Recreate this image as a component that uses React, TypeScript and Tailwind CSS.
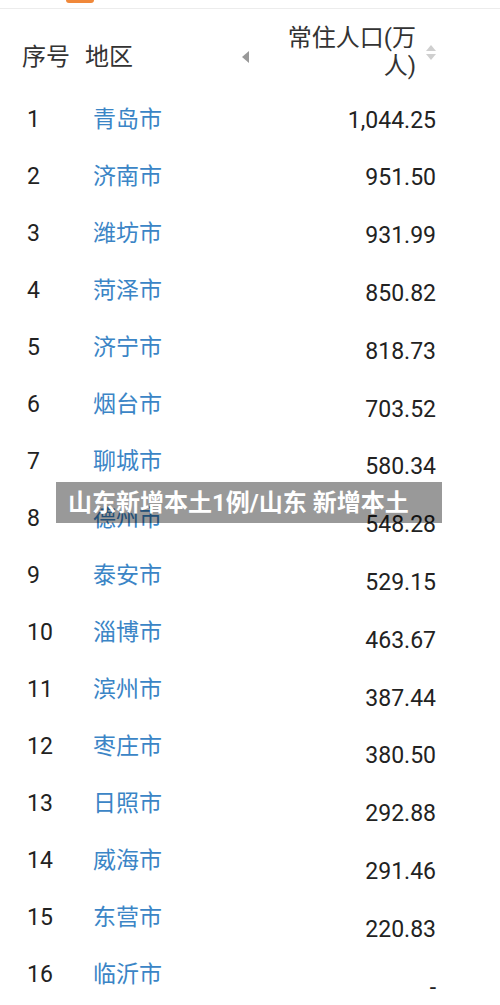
const rows: [string, string][] = [
  ['青岛市', '1,044.25'],
  ['济南市', '951.50'],
  ['潍坊市', '931.99'],
  ['菏泽市', '850.82'],
  ['济宁市', '818.73'],
  ['烟台市', '703.52'],
  ['聊城市', '580.34'],
  ['德州市', '548.28'],
  ['泰安市', '529.15'],
  ['淄博市', '463.67'],
  ['滨州市', '387.44'],
  ['枣庄市', '380.50'],
  ['日照市', '292.88'],
  ['威海市', '291.46'],
  ['东营市', '220.83'],
  ['临沂市', '-'],
];

const font = { fontFamily: 'Roboto, "Noto Sans CJK SC", sans-serif' };

export default function App() {
  return (
    <div className="relative h-[1005px] w-[500px] overflow-hidden bg-white text-[#222]" style={font}>
      {/* top strip */}
      <div className="relative h-[9px] border-b border-[#ececec]">
        <div className="absolute left-[66px] top-0 h-[3px] w-[28px] rounded-b-sm bg-[#f0883a]" />
      </div>

      {/* header */}
      <div className="flex h-[81px] text-[24px] leading-[28px] text-[#333]">
        <div className="ml-[22px] mt-[34px]">序号</div>
        <div className="ml-[15px] mt-[34px]">地区</div>
        <div className="ml-[109px] mt-[42px] h-0 w-0 border-y-[6px] border-r-[7px] border-y-transparent border-r-[#999]" />
        <div className="ml-auto mt-[15px] text-right">
          <div>常住人口(万</div>
          <div>人)</div>
        </div>
        <div className="ml-[10px] mr-[64px] mt-[36px] flex flex-col gap-[3px]">
          <div className="h-0 w-0 border-x-[5px] border-b-[6px] border-x-transparent border-b-[#cfcfcf]" />
          <div className="h-0 w-0 border-x-[5px] border-t-[6px] border-x-transparent border-t-[#cfcfcf]" />
        </div>
      </div>

      {/* body */}
      <div className="mt-[2px] flex text-[23px]">
        <div className="flex flex-col">
          {rows.map(([city], i) => (
            <div key={city} className="flex h-[57px] items-center">
              <div className="w-[93px] pl-[27px]">{i + 1}</div>
              <div className="text-[23px] text-[#3b85c6]">{city}</div>
            </div>
          ))}
        </div>
        <div className="ml-auto mr-[64px] flex flex-col items-end">
          {rows.map(([city, v]) => (
            <div key={city} className="flex h-[57.8px] items-center">
              {v}
            </div>
          ))}
        </div>
      </div>

      {/* overlay caption */}
      <div className="absolute left-[56px] top-[482px] flex h-[41px] w-[386px] items-center bg-black/40 pl-[12px] text-[24px] font-bold text-white">
        山东新增本土1例/山东 新增本土
      </div>
    </div>
  );
}
